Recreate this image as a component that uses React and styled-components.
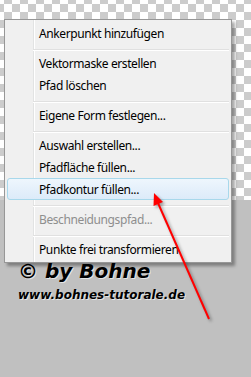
import React from "react";
import styled, { createGlobalStyle } from "styled-components";

const GlobalStyle = createGlobalStyle`
  html, body { margin: 0; padding: 0; }
  body { width: 251px; height: 377px; overflow: hidden; background: #c0c0c0; }
`;

const Canvas = styled.div`
  position: relative;
  box-sizing: border-box;
  width: 251px;
  height: 377px;
  padding: 19px 0 0 4px;
  display: flex;
  flex-direction: column;
  align-items: flex-start;
  background:
    linear-gradient(#c0c0c0, #c0c0c0) 0 200px / 100% 100% no-repeat,
    repeating-conic-gradient(#cccccc 0 25%, #ffffff 0 50%) 4px 4px / 16px 16px;
`;

const Menu = styled.div`
  position: relative;
  width: 222px;
  padding: 2px;
  border: 1px solid #979797;
  background: #f0f0f0;
  box-shadow: 3px 3px 3px rgba(0, 0, 0, 0.35);
  font-family: "Noto Sans", "Open Sans", sans-serif;
  font-size: 12px;
  letter-spacing: -0.4px;
  display: flex;
  flex-direction: column;
  &::before {
    content: "";
    position: absolute;
    top: 0;
    bottom: 0;
    left: 28px;
    width: 1px;
    background: #e2e3e3;
    border-right: 1px solid #ffffff;
  }
`;

const Item = styled.div`
  position: relative;
  box-sizing: border-box;
  height: 22px;
  padding-left: 31px;
  display: flex;
  align-items: center;
  border: 1px solid ${(p) => (p.$active ? "#a8d8eb" : "transparent")};
  border-radius: 3px;
  background: ${(p) =>
    p.$active ? "linear-gradient(#eef6fd, #dcebf9)" : "transparent"};
  color: ${(p) => (p.$disabled ? "#8e8e8e" : "#000000")};
  white-space: nowrap;
`;

const Separator = styled.div`
  position: relative;
  height: 8px;
  margin-left: 26px;
  &::after {
    content: "";
    position: absolute;
    left: 0;
    right: 0;
    top: 5px;
    height: 1px;
    background: #e0e0e0;
    border-bottom: 1px solid #ffffff;
  }
`;

const Watermark = styled.div`
  margin: -4px 0 0 14px;
  font-family: "DejaVu Sans", sans-serif;
  font-style: italic;
  font-weight: bold;
  color: #000;
  text-shadow: 1px 1px 0 rgba(255, 255, 255, 0.6);
  display: flex;
  flex-direction: column;
`;

const Signature = styled.div`
  font-size: 20px;
  line-height: 25px;
`;

const Url = styled.div`
  margin-top: 3px;
  font-size: 12px;
  line-height: 16px;
`;

const ArrowLayer = styled.svg`
  position: absolute;
  left: 0;
  top: 0;
  width: 251px;
  height: 377px;
  pointer-events: none;
  filter: drop-shadow(2px 2px 1.5px rgba(0, 0, 0, 0.35));
`;

const entries = [
  { t: "Ankerpunkt hinzufügen" },
  { sep: true },
  { t: "Vektormaske erstellen" },
  { t: "Pfad löschen" },
  { sep: true },
  { t: "Eigene Form festlegen..." },
  { sep: true },
  { t: "Auswahl erstellen..." },
  { t: "Pfadfläche füllen..." },
  { t: "Pfadkontur füllen...", active: true },
  { sep: true },
  { t: "Beschneidungspfad...", disabled: true },
  { sep: true },
  { t: "Punkte frei transformieren" },
];

export default function App() {
  return (
    <>
      <GlobalStyle />
      <Canvas>
        <Menu>
          {entries.map((e, i) =>
            e.sep ? (
              <Separator key={i} />
            ) : (
              <Item key={i} $active={e.active} $disabled={e.disabled}>
                {e.t}
              </Item>
            )
          )}
        </Menu>
        <Watermark>
          <Signature>© by Bohne</Signature>
          <Url>www.bohnes-tutorale.de</Url>
        </Watermark>
        <ArrowLayer viewBox="0 0 251 377">
          <line x1="209" y1="319" x2="158" y2="203" stroke="#ff0000" strokeWidth="2" />
          <polygon points="154,193 153.5,206 163,202" fill="#ff0000" />
        </ArrowLayer>
      </Canvas>
    </>
  );
}
